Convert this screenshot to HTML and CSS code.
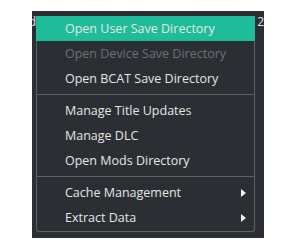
FILE: index.html
```html
<!DOCTYPE html>
<html lang="en">
<head>
    <meta charset="UTF-8">
    <title>Context Menu</title>
    <link rel="stylesheet" href="styles.css">
</head>
<body>
    <div class="window">
        <span class="edge-text left">d</span>
        <ul class="menu">
            <li class="item active">Open User Save Directory</li>
            <li class="item disabled">Open Device Save Directory</li>
            <li class="item">Open BCAT Save Directory</li>
            <li class="separator"></li>
            <li class="item">Manage Title Updates</li>
            <li class="item">Manage DLC</li>
            <li class="item">Open Mods Directory</li>
            <li class="separator"></li>
            <li class="item submenu">Cache Management <span class="arrow"></span></li>
            <li class="item submenu">Extract Data <span class="arrow"></span></li>
        </ul>
        <span class="edge-text right">2</span>
    </div>
</body>
</html>
```

FILE: styles.css
```css
* {
    margin: 0;
    padding: 0;
    box-sizing: border-box;
}

body {
    background: white;
    font-family: 'Open Sans', 'Noto Sans', sans-serif;
}

.window {
    display: flex;
    align-items: flex-start;
    width: 232px;
    height: 227px;
    margin: 11px 0 0 32px;
    background: #2b2f33;
}

.edge-text {
    color: #e8e8e8;
    font-size: 12px;
    line-height: 12px;
    margin-top: 5px;
}

.edge-text.left {
    width: 4px;
    overflow: hidden;
    direction: rtl;
}

.edge-text.right {
    margin-left: 2px;
}

.menu {
    list-style: none;
    width: 220px;
    margin-top: 5px;
    padding-bottom: 1px;
    border: 1px solid #5c6167;
    border-top: none;
    border-radius: 0 0 3px 3px;
}

.item {
    display: flex;
    align-items: center;
    justify-content: space-between;
    height: 25px;
    padding: 0 8px 0 28px;
    color: #e6e6e6;
    font-size: 12.5px;
}

.item.active {
    background: #1fbc9c;
    margin: 0 -1px;
    padding-left: 29px;
}

.item.disabled {
    color: #6b7076;
}

.separator {
    height: 1px;
    margin: 3px 0;
    background: #5c6167;
}

.arrow {
    width: 0;
    height: 0;
    border-top: 4.5px solid transparent;
    border-bottom: 4.5px solid transparent;
    border-left: 5px solid #f2f2f2;
}
```
